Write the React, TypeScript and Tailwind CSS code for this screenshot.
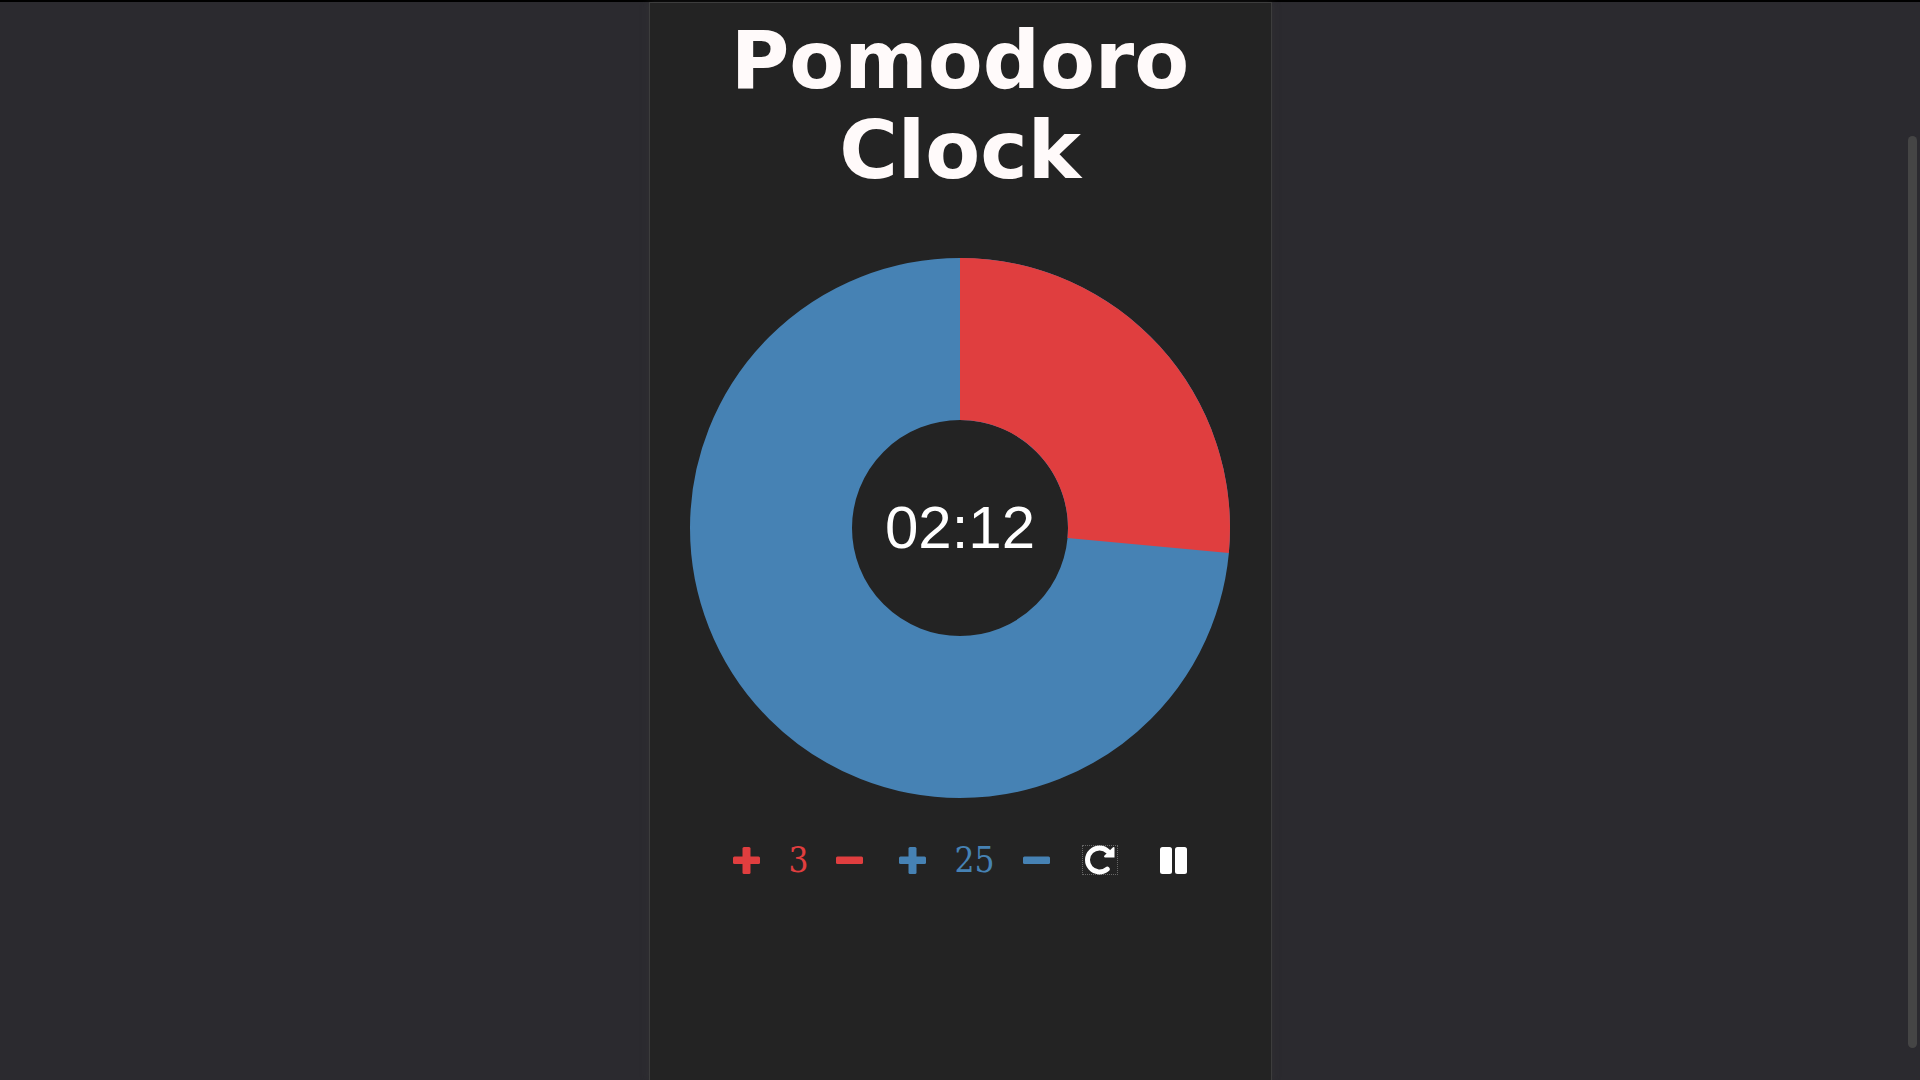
const RED = "#e03e3f";
const BLUE = "#4682b4";

function Plus() {
  return (
    <svg viewBox="0 0 27 27" className="size-[27px]" fill="currentColor" aria-hidden="true">
      <rect x="0" y="9.500" width="27" height="7.500" rx="1.500" />
      <rect x="9.500" y="0" width="8" height="27" rx="1.500" />
    </svg>
  );
}

function Minus() {
  return (
    <svg viewBox="0 0 27 27" className="size-[27px]" fill="currentColor" aria-hidden="true">
      <rect x="0" y="9.500" width="27" height="7.500" rx="1.500" />
    </svg>
  );
}

function Restart() {
  return (
    <svg viewBox="0 0 30 30" className="size-[30px]" aria-hidden="true">
      <path d="M22.200 24.200A12 12 0 1 1 23 6.500" fill="none" stroke="currentColor" strokeWidth="5" strokeLinecap="round" />
      <path d="M29.500 2.800V12.500H20.200C19 12.500 18.600 11.500 19.500 10.600L28 2.300Q29.200 1.500 29.500 2.800Z" fill="currentColor" />
    </svg>
  );
}

function Pause() {
  return (
    <svg viewBox="0 0 27 27" className="size-[27px]" fill="currentColor" aria-hidden="true">
      <rect x="0" y="0" width="12" height="27" rx="2.500" />
      <rect x="15" y="0" width="12" height="27" rx="2.500" />
    </svg>
  );
}

function point(angle: number, radius: number) {
  const a = ((angle - 90) * Math.PI) / 180;
  return `${270 + radius * Math.cos(a)} ${270 + radius * Math.sin(a)}`;
}

function Dial({ angle, time }: { angle: number; time: string }) {
  return (
    <div className="relative w-full">
      <svg viewBox="0 0 540 540" className="block w-full" aria-hidden="true">
        <circle cx="270" cy="270" r="189" fill="none" stroke={BLUE} strokeWidth="162" />
        <path
          d={`M${point(0, 108)}L${point(0, 270)}A270 270 0 0 1 ${point(angle, 270)}L${point(angle, 108)}A108 108 0 0 0 ${point(0, 108)}Z`}
          fill={RED}
        />
      </svg>
      <time className="absolute inset-0 flex items-center justify-center text-[60px] leading-none text-white">
        {time}
      </time>
    </div>
  );
}

export default function App() {
  return (
    <div className="relative flex min-h-screen justify-center border-t-2 border-black bg-[#2b2a2f] font-['Liberation_Sans',sans-serif]">
      <main className="flex w-full max-w-[623px] flex-col items-center border border-b-0 border-[#3d3d3d] bg-[#232323] px-10 shadow-[0_0_8px_rgba(60,60,60,0.4)]">
        <h1 className="mt-[13px] text-center font-['DejaVu_Sans',sans-serif] text-[80px] leading-[90px] font-bold text-[#fffafa]">
          Pomodoro Clock
        </h1>
        <div className="mt-[62px] w-full max-w-[540px]">
          <Dial angle={95.3} time="02:12" />
        </div>
        <div className="mt-[42px] flex h-10 items-center font-['DejaVu_Serif_Condensed','DejaVu_Serif',serif] text-[35px] leading-10">
          <div className="flex items-center gap-7 text-[#e03e3f]">
            <button type="button" aria-label="Increase break"><Plus /></button>
            <output>3</output>
            <button type="button" aria-label="Decrease break"><Minus /></button>
          </div>
          <div className="ml-9 flex items-center gap-7 text-[#4682b4]">
            <button type="button" aria-label="Increase session"><Plus /></button>
            <output>25</output>
            <button type="button" aria-label="Decrease session"><Minus /></button>
          </div>
          <div className="ml-8 flex items-center gap-[42px] text-white">
            <button type="button" aria-label="Restart" className="flex h-[30px] w-9 items-center justify-center border border-dotted border-[#666]"><Restart /></button>
            <button type="button" aria-label="Pause"><Pause /></button>
          </div>
        </div>
      </main>
      <div className="absolute top-[134px] right-[3px] bottom-8 w-[9px] rounded-full bg-[#454545]" />
    </div>
  );
}
